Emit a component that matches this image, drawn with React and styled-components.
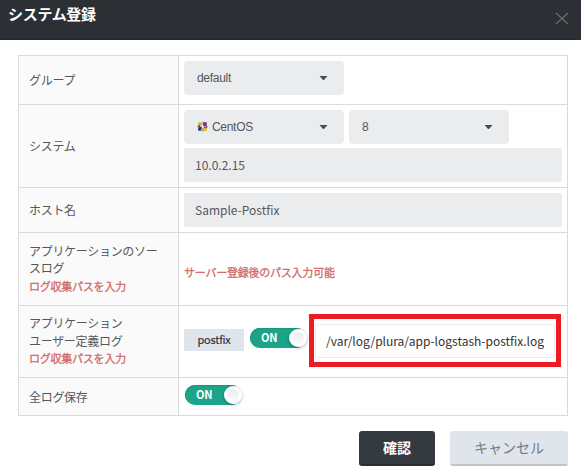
import React from 'react';
import styled, { createGlobalStyle } from 'styled-components';

const GlobalStyle = createGlobalStyle`
  * { box-sizing: border-box; }
  body {
    margin: 0;
    background: #fff;
    color: #55575a;
    font-family: "Noto Sans CJK JP", "Noto Sans", sans-serif;
    font-size: 12px;
    letter-spacing: -0.3px;
  }
`;

const Dialog = styled.main`
  width: 581px;
  height: 470px;
  overflow: hidden;
`;

const Header = styled.header`
  height: 40px;
  display: flex;
  justify-content: space-between;
  align-items: flex-start;
  padding: 3px 12px 0 8px;
  background: #2c2f34;
  border-bottom: 1px solid #26292d;
  color: #fff;
`;

const Title = styled.h1`
  margin: 0;
  font-size: 15px;
  line-height: 22px;
  font-weight: 700;
`;

const CloseButton = styled.button`
  display: block;
  margin-top: 9px;
  padding: 0;
  border: 0;
  background: none;
  line-height: 0;
`;

const Form = styled.div`
  display: grid;
  grid-template-columns: 160px 389px;
  grid-template-rows: 49px 83px 45px 73px 72px 38px;
  width: 550px;
  margin: 15px 0 0 18px;
  border: solid #dadadb;
  border-width: 1px 0 0 1px;
`;

const Label = styled.div`
  display: flex;
  flex-direction: column;
  justify-content: center;
  padding: 0 10px;
  border: solid #dadadb;
  border-width: 0 1px 1px 0;
  background: #fafafa;
  line-height: 18px;
`;

const StackedLabel = styled(Label)`
  padding-bottom: 2px;
  line-height: 17.5px;
`;

const Field = styled.div`
  display: flex;
  flex-wrap: wrap;
  align-items: flex-start;
  align-content: flex-start;
  gap: 4px 5px;
  padding: 5px 5px 0;
  border: solid #dadadb;
  border-width: 0 1px 1px 0;
`;

const CenteredField = styled(Field)`
  align-content: center;
  padding-top: 5px;
`;

const LogField = styled(Field)`
  flex-wrap: nowrap;
  gap: 0;
  padding-top: 8px;
`;

const Note = styled.span`
  color: #d26a6a;
  font-size: 11px;
  line-height: 18px;
  letter-spacing: -0.23px;
  -webkit-text-stroke: 0.3px #d26a6a;
`;

const Select = styled.button`
  display: flex;
  align-items: center;
  width: 160px;
  height: 34px;
  padding: 0 16px 0 13px;
  border: 0;
  border-radius: 4px;
  background: #ebecee;
  color: #54565a;
  font: 12px "Liberation Sans", Arial, sans-serif;
  letter-spacing: -0.3px;
`;

const SelectText = styled.span`
  flex: 1;
  text-align: left;
`;

const Input = styled.input`
  width: 378px;
  height: 34px;
  padding: 0 11px 2px;
  border: 0;
  border-radius: 2px;
  background: #ebecee;
  color: #55575a;
  font: inherit;
  letter-spacing: 0;
  outline: 0;
`;

const Tag = styled.span`
  width: 60px;
  height: 22px;
  margin-top: 15px;
  background: #e0e5ed;
  color: #333;
  font-size: 11px;
  line-height: 21px;
  letter-spacing: -0.2px;
  text-align: center;
  -webkit-text-stroke: 0.2px #333;
`;

const Switch = styled.button`
  flex: none;
  display: flex;
  align-items: center;
  justify-content: space-between;
  width: 57px;
  height: 20px;
  margin: ${p => p.$margin};
  padding: 0 0 0 11px;
  border: 0;
  border-radius: 10px;
  background: linear-gradient(to right, #1ba487 50px, transparent 50px);
  box-shadow: inset 1px 1px 1px -0.5px #168a71;
  color: #fff;
  font: 700 11px/16px "Noto Sans CJK JP", sans-serif;
  letter-spacing: -0.3px;
`;

const SwitchText = styled.span`
  padding-bottom: 2px;
`;

const Knob = styled.span`
  width: 18px;
  height: 18px;
  border: 3px solid #fff;
  border-radius: 50%;
  background: linear-gradient(#ececec, #fafafa);
  box-shadow: 0 1px 3px rgba(0, 0, 0, 0.35);
`;

const Highlight = styled.div`
  flex: none;
  width: 252px;
  height: 53px;
  margin-left: 2px;
  padding: 5px 1px;
  border: 5px solid #ed1c24;
`;

const PathInput = styled(Input)`
  width: 240px;
  height: 34px;
  padding: 0 10px 2px;
  border: 1px solid #ececed;
  background: #fff;
  color: #333;
`;

const Actions = styled.footer`
  display: flex;
  gap: 15px;
  justify-content: flex-end;
  padding: 15px 13px 0 0;
`;

const Button = styled.button`
  width: ${p => (p.$primary ? 76 : 118)}px;
  height: 35px;
  padding: 0 0 1px;
  border: 0;
  border-bottom: 2px solid ${p => (p.$primary ? '#2a2e33' : '#bfc4cc')};
  border-radius: 3px;
  background: ${p => (p.$primary ? '#343a40' : '#e0e5ec')};
  color: ${p => (p.$primary ? '#fff' : '#717b85')};
  font-family: inherit;
  font-size: 14px;
  font-weight: ${p => (p.$primary ? 700 : 400)};
  letter-spacing: 0;
`;

const Caret = () => (
  <svg width="9" height="6" viewBox="0 0 9 6">
    <path d="M.5 1h8L5.2 4.7q-.7.7-1.4 0z" fill="#4b4d51" />
  </svg>
);

const Cross = () => (
  <svg width="14" height="13" viewBox="0 0 14 13">
    <path d="M.8.8l12.4 11.4M13.2.8L.8 12.2" stroke="#77797d" strokeWidth="1.1" />
  </svg>
);

const CentIcon = styled.svg`
  margin: -2px 4px 0 0;
`;

const CentOS = () => (
  <CentIcon width="11" height="11" viewBox="0 0 11 11">
    <path d="M1.2 1.2H5v3.3L3.8 5 1.2 4z" fill="#a4ce43" />
    <path d="M5.5 0L7.7 2 5.5 5z" fill="#ecae3a" />
    <path d="M6 1.2h3.8V5L6 5z" fill="#962b83" />
    <path d="M0 5.5l3-2v2h2L3 7.7z" fill="#9d2a87" />
    <path d="M11 5.5L8.6 8 6 5.5z" fill="#302978" />
    <path d="M1.2 7L5 5.8v4H1.2z" fill="#322b80" />
    <path d="M6 6l3.8 1v2.8H6z" fill="#f1ab34" />
    <path d="M5.5 11L3.6 9l1.9-3 1.8 3z" fill="#a3c846" />
    <path d="M4.5 4.5h2v2h-2z" fill="#f4f2ec" />
  </CentIcon>
);

const Dropdown = ({ icon, children }) => (
  <Select type="button">
    {icon}
    <SelectText>{children}</SelectText>
    <Caret />
  </Select>
);

const Toggle = ({ margin }) => (
  <Switch type="button" role="switch" aria-checked="true" $margin={margin}>
    <SwitchText>ON</SwitchText>
    <Knob />
  </Switch>
);

export default function App() {
  return (
    <Dialog>
      <GlobalStyle />
      <Header>
        <Title>システム登録</Title>
        <CloseButton type="button"><Cross /></CloseButton>
      </Header>
      <Form>
        <Label>グループ</Label>
        <Field><Dropdown>default</Dropdown></Field>

        <Label>システム</Label>
        <Field>
          <Dropdown icon={<CentOS />}>CentOS</Dropdown>
          <Dropdown>8</Dropdown>
          <Input defaultValue="10.0.2.15" />
        </Field>

        <Label>ホスト名</Label>
        <Field><Input defaultValue="Sample-Postfix" /></Field>

        <StackedLabel>
          <span>アプリケーションのソー<br />スログ</span>
          <Note>ログ収集パスを入力</Note>
        </StackedLabel>
        <CenteredField><Note>サーバー登録後のパス入力可能</Note></CenteredField>

        <StackedLabel>
          <span>アプリケーション<br />ユーザー定義ログ</span>
          <Note>ログ収集パスを入力</Note>
        </StackedLabel>
        <LogField>
          <Tag>postfix</Tag>
          <Toggle margin="14px 0 0 6px" />
          <Highlight><PathInput defaultValue="/var/log/plura/app-logstash-postfix.log" /></Highlight>
        </LogField>

        <Label>全ログ保存</Label>
        <Field><Toggle margin="2px 0 0 1px" /></Field>
      </Form>
      <Actions>
        <Button type="button" $primary>確認</Button>
        <Button type="button">キャンセル</Button>
      </Actions>
    </Dialog>
  );
}
